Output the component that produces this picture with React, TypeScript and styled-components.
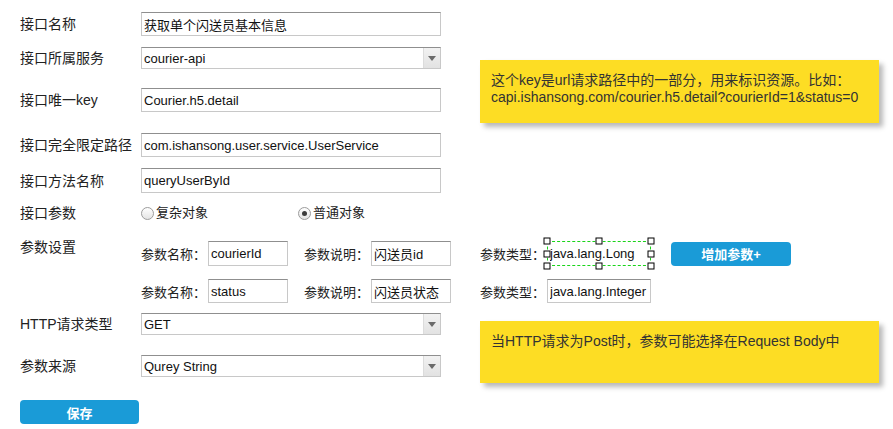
import React from "react";
import styled, { createGlobalStyle } from "styled-components";

const GlobalStyle = createGlobalStyle`
  html, body { margin: 0; padding: 0; background: #fff; }
  body {
    font-family: "Liberation Sans", "Noto Sans CJK SC", sans-serif;
    color: #222;
  }
  * { box-sizing: border-box; }
`;

const Page = styled.div`
  display: flex;
  align-items: flex-start;
  width: 893px;
  height: 429px;
  overflow: hidden;
`;

const Form = styled.div`
  width: 480px;
  flex-shrink: 0;
  padding: 12px 0 0 20px;
  display: flex;
  flex-direction: column;
`;

const Row = styled.div<{ $mt?: number; $align?: string }>`
  display: flex;
  align-items: ${(p) => p.$align ?? "center"};
  margin-top: ${(p) => p.$mt ?? 0}px;
  white-space: nowrap;
`;

const Label = styled.div`
  width: 121px;
  flex-shrink: 0;
  font-size: 14px;
  line-height: 16px;
  color: #222;
`;

const TextInput = styled.input<{ $w?: number; $h?: number }>`
  width: ${(p) => p.$w ?? 300}px;
  height: ${(p) => p.$h ?? 24}px;
  margin: 0;
  border: 1px solid #c8c8c8;
  border-top-color: #8f8f8f;
  border-radius: 0;
  background: #fff;
  font-family: "Liberation Sans", "Noto Sans CJK SC", sans-serif;
  font-size: 13px;
  color: #111;
  padding: 0 2px;
  outline: none;
  flex-shrink: 0;
`;

const SelectBox = styled.div<{ $h?: number }>`
  width: 300px;
  height: ${(p) => p.$h ?? 22}px;
  display: flex;
  border: 1px solid #c8c8c8;
  border-top-color: #8f8f8f;
  background: #fff;
  flex-shrink: 0;
`;

const SelectValue = styled.div`
  flex: 1;
  display: flex;
  align-items: center;
  padding-left: 2px;
  font-size: 13px;
  color: #111;
`;

const SelectArrow = styled.div`
  width: 17px;
  display: flex;
  align-items: center;
  justify-content: center;
  background: linear-gradient(#f2f2f2, #e2e2e2);
  border-left: 1px solid #dcdcdc;
  &::after {
    content: "";
    width: 0;
    height: 0;
    border-left: 4px solid transparent;
    border-right: 4px solid transparent;
    border-top: 5px solid #6a6a6a;
  }
`;

const RadioOption = styled.label<{ $w?: number }>`
  display: flex;
  align-items: center;
  width: ${(p) => p.$w ?? 157}px;
  font-size: 13px;
  line-height: 16px;
  color: #222;
`;

const RadioCircle = styled.span<{ $checked?: boolean }>`
  width: 13px;
  height: 13px;
  border-radius: 50%;
  border: 1px solid #9c9c9c;
  background: linear-gradient(#ffffff, #e4e4e4);
  display: inline-flex;
  align-items: center;
  justify-content: center;
  margin-right: 2px;
  flex-shrink: 0;
  &::after {
    content: "";
    width: 5px;
    height: 5px;
    border-radius: 50%;
    background: #3c3c3c;
    display: ${(p) => (p.$checked ? "block" : "none")};
  }
`;

const ParamList = styled.div`
  display: flex;
  flex-direction: column;
  gap: 13px;
  padding-top: 2px;
`;

const ParamLabel = styled.span<{ $ml?: number }>`
  width: 67px;
  margin-left: ${(p) => p.$ml ?? 0}px;
  font-size: 13px;
  color: #222;
  flex-shrink: 0;
`;

const Selected = styled.div`
  position: relative;
  display: flex;
  flex-shrink: 0;
  ${TextInput} {
    border-color: transparent;
  }
`;

const DashFrame = styled.div`
  position: absolute;
  inset: 0;
  border: 1px dashed #19d419;
  pointer-events: none;
`;

const Handle = styled.span<{ $x: string; $y: string }>`
  position: absolute;
  width: 7px;
  height: 7px;
  background: #fff;
  border: 1px solid #000;
  left: ${(p) => p.$x};
  top: ${(p) => p.$y};
  transform: translate(-50%, -50%);
`;

const BlueButton = styled.button<{ $w?: number; $ml?: number }>`
  width: ${(p) => p.$w ?? 120}px;
  height: 24px;
  margin: 0 0 0 ${(p) => p.$ml ?? 0}px;
  padding: 0;
  border: none;
  border-radius: 4px;
  background: #1a9bd7;
  color: #fff;
  font-family: "Liberation Sans", "Noto Sans CJK SC", sans-serif;
  font-size: 13px;
  font-weight: bold;
  flex-shrink: 0;
`;

const NotesColumn = styled.div`
  display: flex;
  flex-direction: column;
  padding-top: 60px;
`;

const Note = styled.div<{ $mt?: number; $h: number }>`
  width: 399px;
  height: ${(p) => p.$h}px;
  margin-top: ${(p) => p.$mt ?? 0}px;
  background: #fddd24;
  box-shadow: 4px 4px 5px rgba(0, 0, 0, 0.28);
  padding: 12px 11px;
  font-size: 14px;
  line-height: 17px;
  color: #333;
  white-space: nowrap;
`;

const handles: [string, string][] = [
  ["0%", "0%"],
  ["50%", "0%"],
  ["100%", "0%"],
  ["0%", "50%"],
  ["100%", "50%"],
  ["0%", "100%"],
  ["50%", "100%"],
  ["100%", "100%"],
];

function Select({ value }: { value: string }) {
  return (
    <SelectBox>
      <SelectValue>{value}</SelectValue>
      <SelectArrow />
    </SelectBox>
  );
}

export default function App() {
  return (
    <>
      <GlobalStyle />
      <Page>
        <Form>
          <Row>
            <Label>接口名称</Label>
            <TextInput readOnly defaultValue="获取单个闪送员基本信息" />
          </Row>
          <Row $mt={11}>
            <Label>接口所属服务</Label>
            <Select value="courier-api" />
          </Row>
          <Row $mt={19}>
            <Label>接口唯一key</Label>
            <TextInput readOnly defaultValue="Courier.h5.detail" />
          </Row>
          <Row $mt={21}>
            <Label>接口完全限定路径</Label>
            <TextInput readOnly defaultValue="com.ishansong.user.service.UserService" />
          </Row>
          <Row $mt={11}>
            <Label>接口方法名称</Label>
            <TextInput readOnly defaultValue="queryUserById" $h={25} />
          </Row>
          <Row $mt={12}>
            <Label>接口参数</Label>
            <RadioOption>
              <RadioCircle />
              复杂对象
            </RadioOption>
            <RadioOption>
              <RadioCircle $checked />
              普通对象
            </RadioOption>
          </Row>
          <Row $mt={18} $align="flex-start">
            <Label>参数设置</Label>
            <ParamList>
              <Row>
                <ParamLabel>参数名称：</ParamLabel>
                <TextInput readOnly defaultValue="courierId" $w={80} $h={25} />
                <ParamLabel $ml={16}>参数说明：</ParamLabel>
                <TextInput readOnly defaultValue="闪送员id" $w={80} $h={25} />
                <ParamLabel $ml={29}>参数类型：</ParamLabel>
                <Selected>
                  <TextInput readOnly defaultValue="java.lang.Long" $w={104} $h={25} />
                  <DashFrame />
                  {handles.map(([x, y]) => (
                    <Handle key={x + y} $x={x} $y={y} />
                  ))}
                </Selected>
                <BlueButton $ml={20}>增加参数+</BlueButton>
              </Row>
              <Row>
                <ParamLabel>参数名称：</ParamLabel>
                <TextInput readOnly defaultValue="status" $w={80} />
                <ParamLabel $ml={16}>参数说明：</ParamLabel>
                <TextInput readOnly defaultValue="闪送员状态" $w={80} />
                <ParamLabel $ml={29}>参数类型：</ParamLabel>
                <TextInput readOnly defaultValue="java.lang.Integer" $w={104} />
              </Row>
            </ParamList>
          </Row>
          <Row $mt={10}>
            <Label>HTTP请求类型</Label>
            <Select value="GET" />
          </Row>
          <Row $mt={20}>
            <Label>参数来源</Label>
            <Select value="Qurey String" />
          </Row>
          <Row $mt={23}>
            <BlueButton $w={119}>保存</BlueButton>
          </Row>
        </Form>
        <NotesColumn>
          <Note $h={63}>
            这个key是url请求路径中的一部分，用来标识资源。比如：
            <br />
            capi.ishansong.com/courier.h5.detail?courierId=1&amp;status=0
          </Note>
          <Note $h={62} $mt={198}>
            当HTTP请求为Post时，参数可能选择在Request Body中
          </Note>
        </NotesColumn>
      </Page>
    </>
  );
}
